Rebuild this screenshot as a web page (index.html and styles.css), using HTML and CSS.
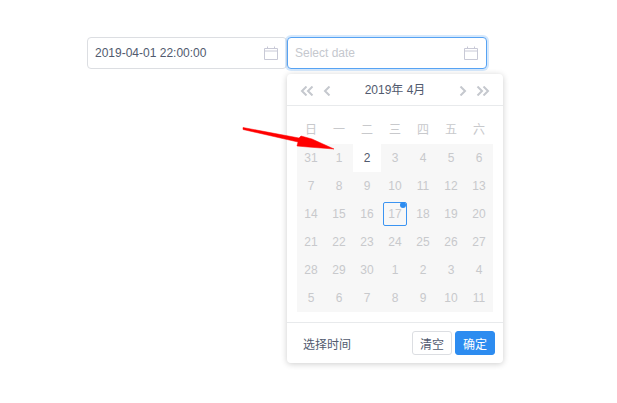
FILE: index.html
```html
<!DOCTYPE html>
<html lang="zh">
<head>
<meta charset="utf-8">
<title>Date picker</title>
<link rel="stylesheet" href="styles.css">
</head>
<body>
<div class="page">
  <div class="inputs">
    <div class="input">
      <span class="value">2019-04-01 22:00:00</span>
      <svg class="cal" width="14" height="14" viewBox="0 0 14 14"><path d="M.5 2.500h13v11H.5zM.5 5h13M3.500.5v2.500M10.500.5v2.500" fill="none" stroke="#c8c9d6"/></svg>
    </div>
    <div class="input focused">
      <span class="placeholder">Select date</span>
      <svg class="cal" width="14" height="14" viewBox="0 0 14 14"><path d="M.5 2.500h13v11H.5zM.5 5h13M3.500.5v2.500M10.500.5v2.500" fill="none" stroke="#c8c9d6"/></svg>
    </div>
  </div>
  <div class="panel">
    <div class="head">
      <div class="nav">
        <svg width="14" height="10" viewBox="0 0 14 10"><path d="M6.500.5 2 5l4.500 4.500M12.500.5 8 5l4.500 4.500" fill="none" stroke="#c5c8ce" stroke-width="2"/></svg>
        <svg width="8" height="10" viewBox="0 0 8 10"><path d="M6.500.5 2 5l4.500 4.500" fill="none" stroke="#c5c8ce" stroke-width="2"/></svg>
      </div>
      <div class="title">2019年 4月</div>
      <div class="nav">
        <svg width="8" height="10" viewBox="0 0 8 10"><path d="M1.500.5 6 5 1.500 9.500" fill="none" stroke="#c5c8ce" stroke-width="2"/></svg>
        <svg width="14" height="10" viewBox="0 0 14 10"><path d="M1.500.5 6 5 1.500 9.500M7.500.5 12 5 7.500 9.500" fill="none" stroke="#c5c8ce" stroke-width="2"/></svg>
      </div>
    </div>
    <div class="body">
      <div class="weeks">
        <span>日</span><span>一</span><span>二</span><span>三</span><span>四</span><span>五</span><span>六</span>
      </div>
      <div class="days">
        <span>31</span><span>1</span><span class="on">2</span><span>3</span><span>4</span><span>5</span><span>6</span>
        <span>7</span><span>8</span><span>9</span><span>10</span><span>11</span><span>12</span><span>13</span>
        <span>14</span><span>15</span><span>16</span><span class="today">17</span><span>18</span><span>19</span><span>20</span>
        <span>21</span><span>22</span><span>23</span><span>24</span><span>25</span><span>26</span><span>27</span>
        <span>28</span><span>29</span><span>30</span><span>1</span><span>2</span><span>3</span><span>4</span>
        <span>5</span><span>6</span><span>7</span><span>8</span><span>9</span><span>10</span><span>11</span>
      </div>
    </div>
    <div class="foot">
      <span class="time">选择时间</span>
      <div class="btns">
        <button class="btn">清空</button>
        <button class="btn primary">确定</button>
      </div>
    </div>
  </div>
  <svg class="arrow" width="100" height="30" viewBox="0 0 100 30"><path d="M1 1.500 57 12 59 10 70 13 92 23 66 21 55 20 56 16 1 3.500Z" fill="#f00" stroke="#f00" stroke-width=".5"/></svg>
</div>
</body>
</html>
```
FILE: styles.css
```css
* { box-sizing: border-box; }
html, body { margin: 0; background: #fff; }
body {
  font-family: "Liberation Sans", "Noto Sans CJK SC", sans-serif;
  font-size: 12px;
  color: #515a6e;
  height: 403px;
  overflow: hidden;
}
.page { position: relative; padding: 37px 0 0 87px; }
.inputs { display: flex; }
.input {
  width: 200px;
  height: 32px;
  border: 1px solid #dcdee2;
  border-radius: 4px;
  display: flex;
  align-items: center;
  justify-content: space-between;
  padding: 0 8px 0 7px;
  background: #fff;
}
.input.focused {
  border-color: #57a3f3;
  box-shadow: 0 0 0 2px rgba(45, 140, 240, .2);
}
.placeholder { color: #c5c8ce; }
.cal { display: block; margin-top: -1px; }
.panel {
  width: 216px;
  height: 289px;
  margin: 5px 0 0 200px;
  background: #fff;
  border-radius: 4px;
  box-shadow: 0 1px 6px rgba(0, 0, 0, .2);
  display: flex;
  flex-direction: column;
}
.head {
  height: 32px;
  border-bottom: 1px solid #e8eaec;
  display: flex;
  align-items: center;
  justify-content: space-between;
  padding: 0 13px;
}
.nav { display: flex; align-items: center; gap: 9px; margin-top: 2px; }
.nav svg { display: block; }
.title { margin-top: -3px; }
.body { padding: 8px 10px 0; flex: 1; }
.weeks, .days { display: grid; grid-template-columns: repeat(7, 28px); }
.weeks { margin-bottom: 2px; }
.weeks span {
  height: 28px;
  display: flex;
  align-items: center;
  justify-content: center;
  color: #c8c9cc;
}
.days { background: #f7f7f7; grid-auto-rows: 28px; }
.days span {
  display: flex;
  align-items: center;
  justify-content: center;
  color: #c8c9cc;
}
.days .on { background: #fff; color: #515a6e; }
.days .today {
  position: relative;
  border: 1px solid #3b94f2;
  border-radius: 2px;
  margin: 2px;
}
.today::after {
  content: "";
  position: absolute;
  top: 0;
  right: 0;
  width: 6px;
  height: 6px;
  border-radius: 50%;
  background: #2d8cf0;
  transform: translateY(-1px);
}
.foot {
  height: 41px;
  border-top: 1px solid #e8eaec;
  display: flex;
  align-items: center;
  justify-content: space-between;
  padding: 0 8px 0 16px;
}
.btns { display: flex; gap: 3px; }
.btn {
  width: 40px;
  height: 24px;
  padding: 0;
  border: 1px solid #dcdee2;
  border-radius: 3px;
  background: #fff;
  color: #515a6e;
  font: inherit;
}
.btn.primary { background: #2d8cf0; border-color: #2d8cf0; color: #fff; }
.arrow { position: absolute; left: 242px; top: 126px; }
```
